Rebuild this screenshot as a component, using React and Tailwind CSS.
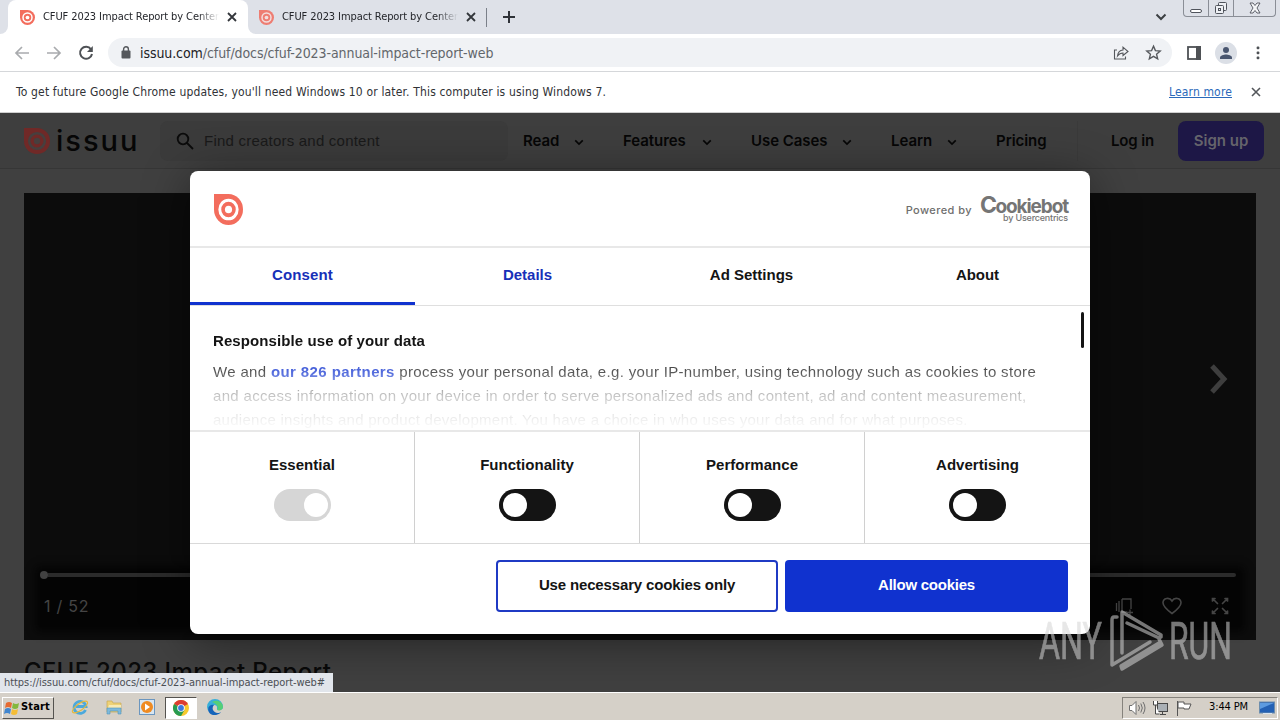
import React from 'react';

const TAHOMA = "font-['DejaVu_Sans_Condensed','DejaVu_Sans',sans-serif]";
const ARIAL = "font-['Liberation_Sans',Arial,sans-serif]";
const INTER = "font-['Inter',sans-serif]";

function IssuuMark({ className, ring = '#ffffff', fill = '#f36d5d' }) {
  return (
    <svg viewBox="0 0 30 30" className={className} preserveAspectRatio="none">
      <path d="M0 0H15A15 15 0 1 1 0 15Z" fill={fill} />
      <circle cx="15" cy="15" r="9" fill="none" stroke={ring} strokeWidth="3" />
      <circle cx="15" cy="15" r="3.7" fill={ring} />
    </svg>
  );
}

function Cross({ className, w = 1.8 }) {
  return (
    <svg viewBox="0 0 10 10" className={className} fill="none" stroke="currentColor" strokeWidth={w}>
      <path d="M1 1l8 8M9 1l-8 8" />
    </svg>
  );
}

function Chevron({ className }) {
  return (
    <svg viewBox="0 0 12 8" className={className} fill="none" stroke="currentColor" strokeWidth="2">
      <path d="M1.5 1.5L6 6l4.5-4.5" />
    </svg>
  );
}

function TabTitle() {
  return (
    <span className="ml-2 w-[178px] overflow-hidden whitespace-pre text-[11px] tracking-[-0.09px] text-[#24262b] [mask-image:linear-gradient(to_right,black_155px,transparent_176px)]">
      CFUF 2023 Impact Report by Center
    </span>
  );
}

function TabStrip() {
  return (
    <div className="flex h-[34px] shrink-0 items-start bg-[#dee1e8]">
      <div className="flex h-[34px] w-2 items-end bg-white"><div className="h-[34px] w-2 rounded-br-lg bg-[#dee1e8]" /></div>
      <div className="flex h-[34px] w-[240px] items-center rounded-t-lg bg-white pl-[12px]">
        <IssuuMark className="h-[15px] w-[15px]" />
        <TabTitle />
        <Cross className="ml-[6px] h-[10px] w-[10px] text-[#33363b]" />
      </div>
      <div className="h-[34px] w-2 bg-white"><div className="h-[34px] w-2 rounded-bl-lg bg-[#dee1e8]" /></div>
      <div className="flex h-[34px] w-[230px] items-center pl-[3px]">
        <IssuuMark className="h-[15px] w-[15px]" ring="#f3dede" fill="#ee7d72" />
        <TabTitle />
        <Cross className="ml-[6px] h-[10px] w-[10px] text-[#33363b]" />
      </div>
      <div className="mt-2 h-[19px] w-px bg-[#7b8089]" />
      <svg viewBox="0 0 12 12" className="mt-[11px] ml-4 h-3 w-3" stroke="#2f3238" strokeWidth="2"><path d="M6 0v12M0 6h12" /></svg>
      <div className="flex-1" />
      <Chevron className="mt-[13px] mr-[16px] h-[8px] w-[12px] text-[#3c4043]" />
      <div className="flex h-[17px] w-[93px] rounded-b border border-t-0 border-[#8a8e96]">
        <div className="flex w-[25px] items-end justify-center border-r border-[#8a8e96] pb-[3px]"><div className="h-[4px] w-3 rounded-sm border border-[#50545c] bg-white" /></div>
        <div className="flex w-[25px] justify-center border-r border-[#8a8e96] pt-[1px]">
          <svg viewBox="0 0 14 14" className="h-[14px] w-[14px]" fill="#eef0f4" stroke="#50545c"><rect x="4.500" y="1.500" width="8" height="8" rx="1" /><rect x="1.500" y="4.500" width="8" height="8" rx="1" /><rect x="4.500" y="7.500" width="2" height="2" /></svg>
        </div>
        <div className="flex flex-1 justify-center pt-[2px]">
          <svg viewBox="0 0 12 12" className="h-[12px] w-[12px]"><path d="M1 1h3l2 2.500L8 1h3L8 6l3 5H8L6 8.500 4 11H1l3-5z" fill="#f4f5f7" stroke="#50545c" strokeWidth="0.900" /></svg>
        </div>
      </div>
      <div className="w-[4px]" />
    </div>
  );
}

function Toolbar() {
  return (
    <div className="flex h-[38px] shrink-0 items-center border-b border-[#d5d7da] bg-white">
      <svg viewBox="0 0 16 16" className="ml-[14px] h-4 w-4" fill="none" stroke="#a9abae" strokeWidth="1.700"><path d="M15 8H2M8 2L2 8l6 6" /></svg>
      <svg viewBox="0 0 16 16" className="ml-4 h-4 w-4" fill="none" stroke="#a9abae" strokeWidth="1.700"><path d="M1 8h13M8 2l6 6-6 6" /></svg>
      <svg viewBox="0 0 16 16" className="ml-4 h-4 w-4" fill="none" stroke="#4e5155" strokeWidth="2"><path d="M13 4.300A6 6 0 1 0 14 9" /><path d="M14.800 1v6H9z" fill="#4e5155" stroke="none" /></svg>
      <div className="ml-[14px] flex h-[29px] w-[1064px] items-center rounded-full bg-[#f0f2f5] pl-[13px] pr-[10px]">
        <svg viewBox="0 0 10 13" className="h-[13px] w-[10px]"><rect x="0.500" y="4.500" width="9" height="8" rx="1" fill="#55585c" /><path d="M2.600 5V3.200a2.400 2.400 0 0 1 4.800 0V5" fill="none" stroke="#55585c" strokeWidth="1.400" /></svg>
        <span className="ml-[9px] text-[14px] leading-none tracking-[-0.08px] text-[#62666b]"><span className="text-[#202124]">issuu.com</span>/cfuf/docs/cfuf-2023-annual-impact-report-web</span>
        <div className="flex-1" />
        <svg viewBox="0 0 16 16" className="h-4 w-4" fill="none" stroke="#55585c" strokeWidth="1.100"><path d="M4 5H1.500v9h11v-2.500" /><path d="M4.500 11C5 7 7 5.200 10 5V2.200L15 6.500 10 10.500V8C7.500 8 6 9 4.500 11z" /></svg>
        <svg viewBox="0 0 24 24" className="ml-4 h-[17px] w-[17px]" fill="none" stroke="#55585c" strokeWidth="1.900"><path d="M12 3l2.700 6.300 6.800.6-5.200 4.500 1.600 6.700L12 17.500l-5.900 3.600 1.600-6.700L2.500 9.900l6.800-.6z" /></svg>
      </div>
      <svg viewBox="0 0 14 14" className="ml-[15px] h-[14px] w-[14px]"><rect x="1" y="1" width="12" height="12" fill="none" stroke="#4e5155" strokeWidth="1.800" /><rect x="9" y="0" width="5" height="14" fill="#4e5155" /></svg>
      <svg viewBox="0 0 22 22" className="ml-[14px] h-[22px] w-[22px]"><circle cx="11" cy="11" r="11" fill="#dbdfe6" /><circle cx="11" cy="8" r="3" fill="#49566f" /><path d="M5 17v-1.500c0-2 4-3 6-3s6 1 6 3V17z" fill="#49566f" /></svg>
      <svg viewBox="0 0 4 14" className="ml-[19px] h-[14px] w-[4px]" fill="#4e5155"><rect x=".6" y="0.500" width="2.800" height="2.800" rx="1" /><rect x=".6" y="5.500" width="2.800" height="2.800" rx="1" /><rect x=".6" y="10.500" width="2.800" height="2.800" rx="1" /></svg>
    </div>
  );
}

function NavItem({ label, className, chevron = true }) {
  return (
    <div className={`flex items-center ${className}`}>
      <span className="flex-1">{label}</span>
      {chevron && <Chevron className="mt-[2px] h-[7px] w-[10px]" />}
    </div>
  );
}

function SiteHeader() {
  return (
    <div className={`flex h-[56px] shrink-0 items-center border-b border-[#363636] bg-[#3e3e3e] text-[15px] font-semibold text-[#060606] ${INTER}`}>
      <IssuuMark className="ml-6 h-[26px] w-[26px]" fill="#702927" ring="#473f3e" />
      <span className="ml-[6px] w-[84px] text-[29px] leading-none font-medium tracking-[2px]">issuu</span>
      <div className="ml-[20px] flex h-10 w-[348px] shrink-0 items-center rounded-lg bg-[#3b3b3b] pl-4">
        <svg viewBox="0 0 18 18" className="h-[18px] w-[18px]" fill="none" stroke="#0b0b0b" strokeWidth="1.800"><circle cx="7" cy="7" r="5.300" /><path d="M11 11l6 6" /></svg>
        <span className={`mt-[2px] ml-[10px] text-[15px] font-normal tracking-[0.22px] text-[#191919] ${ARIAL}`}>Find creators and content</span>
      </div>
      <div className="flex pt-[2px] text-[15px] tracking-[-0.05px]">
        <NavItem label="Read" className="ml-[15px] w-[61px]" />
        <NavItem label="Features" className="ml-[39px] w-[89px]" />
        <NavItem label="Use Cases" className="ml-[39px] w-[101px]" />
        <NavItem label="Learn" className="ml-[39px] w-[66px]" />
        <NavItem label="Pricing" className="ml-[39px] w-[51px]" chevron={false} />
      </div>
      <div className="ml-[30px] h-10 w-px bg-[#3a3a3a]" />
      <span className="ml-[33px] w-[43px] pt-[2px] tracking-[-0.15px] whitespace-nowrap">Log in</span>
      <div className="ml-[24px] flex h-10 w-[86px] items-center justify-center rounded-lg bg-[#1d1746] pt-px text-[#65646b]">Sign up</div>
    </div>
  );
}

function Reader() {
  return (
    <div className="mx-6 mt-6 flex h-[447px] shrink-0 flex-col justify-between bg-[#0c0c0c]">
      <svg viewBox="0 0 22 34" className="mt-[169px] mr-[26px] h-[34px] w-[22px] self-end" fill="none" stroke="#3e3e3e" strokeWidth="5"><path d="M4 4l12 13L4 30" /></svg>
      <div className="mx-4 mb-[13px] bg-[#040404] pb-[10px] shadow-[0_0_8px_4px_#040404]">
        <div className="flex items-center">
          <div className="h-2 w-2 rounded-full bg-[#414141]" />
          <div className="mr-1 h-1 flex-1 rounded-r bg-[#2b2b2b]" />
        </div>
        <div className="mt-[16px] flex h-[22px] items-center px-1 text-[#454545]">
          <span className={`flex-1 text-[16px] tracking-[0.75px] ${INTER}`}>1 / 52</span>
          <svg viewBox="0 0 18 18" className="mr-[29px] h-[18px] w-[18px]" fill="none" stroke="currentColor" strokeWidth="1.300"><path d="M7 2h9v10M7 2v13h5M4 4v11M1.500 6v8M12 15.500h6M15 12.500v6" /></svg>
          <svg viewBox="0 0 20 18" className="mr-[29px] h-[18px] w-[20px]" fill="none" stroke="currentColor" strokeWidth="1.600"><path d="M10 16.500C4 12 1 9 1 5.700 1 1 7.500-.3 10 4c2.500-4.300 9-3 9 1.700 0 3.300-3 6.300-9 10.800z" /></svg>
          <svg viewBox="0 0 18 18" className="mr-[7px] h-[18px] w-[18px]" fill="none" stroke="currentColor" strokeWidth="1.700" strokeLinecap="round"><path d="M1.500 4V1.500H4M2 2l4.500 4.500M14 1.500h2.500V4M16 2l-4.500 4.500M1.500 14v2.500H4M2 16l4.500-4.500M16.500 14v2.500H14M16 16l-4.500-4.500" /></svg>
        </div>
      </div>
    </div>
  );
}

function Switch({ disabled }) {
  return disabled ? (
    <div className="flex h-8 w-[57px] items-center justify-end rounded-full bg-[#d6d6d6] pr-[3px]"><div className="h-6 w-6 rounded-full bg-white" /></div>
  ) : (
    <div className="flex h-8 w-[57px] items-center rounded-full bg-[#141414] pl-1"><div className="h-6 w-6 rounded-full bg-white" /></div>
  );
}

function ConsentDialog() {
  return (
    <div className={`absolute top-[171px] left-[190px] flex h-[463px] w-[900px] flex-col overflow-hidden rounded-lg bg-white text-[15px] text-[#141414] shadow-[0_8px_48px_rgba(0,0,0,0.45)] ${ARIAL}`}>
      <div className="flex h-[77px] shrink-0 items-center border-b-2 border-[#e8e8e8] pt-px pr-[22px] pl-[24px]">
        <IssuuMark className="h-[31px] w-[29px]" />
        <div className="flex-1" />
        <span className={`pt-[2px] text-[11px] font-medium tracking-[0.43px] text-[#6e6e6e] ${INTER}`}>Powered by</span>
        <div className={`ml-2 flex w-[88px] flex-col items-end whitespace-nowrap text-[#757575] ${INTER}`}>
          <span className="flex h-[17px] w-[88px] items-baseline text-[19px] leading-[18px] font-bold tracking-[-1.1px]"><span className="text-[23px] tracking-[-1.5px]">C</span>ookiebot</span>
          <span className="text-[9px] leading-[10px] font-medium tracking-[-0.2px]">by Usercentrics</span>
        </div>
      </div>
      <div className="grid h-[58px] shrink-0 grid-cols-4 border-b border-[#dfdfdf] text-center leading-[54px] font-bold">
        <div className="h-[57px] border-b-[3px] border-[#1032cf] tracking-[0.15px] text-[#1730b8]">Consent</div>
        <div className="text-[#1730b8]">Details</div>
        <div className="pr-[2px]">Ad Settings</div>
        <div className="tracking-[-0.1px]">About</div>
      </div>
      <div className="flex h-[126px] shrink-0 border-b-2 border-[#e8e8e8] pl-[23px]">
        <div className="h-[124px] flex-1 overflow-hidden whitespace-nowrap [mask-image:linear-gradient(to_bottom,black_40px,rgba(0,0,0,0.72)_66px,rgba(0,0,0,0.24)_90px,rgba(0,0,0,0.04)_118px)]">
          <div className="pt-[25px] leading-[20px] font-bold tracking-[0.1px]">Responsible use of your data</div>
          <div className="mt-[9px] leading-[24px] tracking-[0.33px]">
            <div>We and <b className="tracking-[0.4px] text-[#1032cf]">our 826 partners</b> process your personal data, e.g. your IP-number, using technology such as cookies to store</div>
            <div>and access information on your device in order to serve personalized ads and content, ad and content measurement,</div>
            <div className="tracking-[0.27px]">audience insights and product development. You have a choice in who uses your data and for what purposes.</div>
          </div>
        </div>
        <div className="mt-[6px] mr-[6px] h-[36px] w-[3px] rounded bg-[#141414]" />
      </div>
      <div className="grid h-[112px] shrink-0 grid-cols-4 divide-x divide-[#d0d0d0] border-b border-[#d9d9d9] text-center font-bold">
        {['Essential', 'Functionality', 'Performance', 'Advertising'].map((name, i) => (
          <div key={name} className="flex flex-col items-center pt-[22px] leading-[22px] tracking-[0.03px]">
            {name}
            <div className="mt-[13px]"><Switch disabled={i === 0} /></div>
          </div>
        ))}
      </div>
      <div className="flex flex-1 justify-end gap-[7px] pt-[16px] pr-[22px] font-bold">
        <div className="flex h-[52px] w-[282px] items-center justify-center rounded-[4px] border-2 border-[#1f3ac4] pb-[2px] tracking-[-0.15px]">Use necessary cookies only</div>
        <div className="flex h-[52px] w-[283px] items-center justify-center rounded-[4px] bg-[#1032cf] pb-[2px] tracking-[-0.25px] text-white">Allow cookies</div>
      </div>
    </div>
  );
}

function Watermark() {
  return (
    <svg viewBox="0 0 198 64" className="absolute top-[609px] left-[1038px] h-[64px] w-[198px] opacity-55">
      <g fill="#d4d4d4" stroke="#d4d4d4" strokeWidth="0.700" fontFamily="Roboto, sans-serif" fontSize="51" fontWeight="400">
        <text x="1" y="50" textLength="63" lengthAdjust="spacingAndGlyphs">ANY</text>
        <text x="131" y="50" textLength="63" lengthAdjust="spacingAndGlyphs">RUN</text>
      </g>
      <g fill="none" stroke="#d4d4d4" strokeWidth="3.500" strokeLinecap="round" strokeLinejoin="round">
        <path d="M84 44V3l39 23M123 26v2l-2 1L89 14" />
        <path d="M79 8h-3q-2 0-2 3v45l38-23" />
        <path d="M121 30l3 6-40 24-1-3 38-23" />
      </g>
    </svg>
  );
}

function Taskbar() {
  return (
    <div className="flex h-[28px] shrink-0 items-center border-t border-white bg-[#d5d0c8]">
      <div className="ml-[2px] mt-[2px] flex h-[22px] w-[52px] items-center border border-t-white border-r-[#55534f] border-b-[#55534f] border-l-white pl-[1px] text-[11px] font-bold tracking-[0.15px] text-black">
        <svg viewBox="0 0 16 16" className="mr-[1px] h-4 w-4"><path d="M2 3q3-2 6 0L7 8Q4 6 1 8z" fill="#e66b32" /><path d="M9 3q3 2 6 0l-1 5q-3 2-6 0z" fill="#83b83c" /><path d="M1 9q3-2 6 0l-1 5Q3 12 0 14z" fill="#4186cf" /><path d="M8 9q3 2 6 0l-1 5q-3 2-6 0z" fill="#f4bd35" /></svg>
        Start
      </div>
      <svg viewBox="0 0 18 18" className="ml-[17px] h-[18px] w-[18px]"><path d="M14.500 12A6 6 0 1 1 15 8.500H5" fill="none" stroke="#4ba9dc" strokeWidth="2.800" /><ellipse cx="9" cy="9" rx="9" ry="3.300" transform="rotate(-35 9 9)" fill="none" stroke="#e5b83c" strokeWidth="1.200" /></svg>
      <svg viewBox="0 0 18 18" className="ml-[16px] h-[18px] w-[18px]"><path d="M2 3h5l1 2h8v9H2z" fill="#eed277" stroke="#c9a953" strokeWidth=".7" /><path d="M4 7h12v3H3z" fill="#f8eab4" /><path d="M2 16v-6h14v6h-3v-3H5v3z" fill="#7eb9db" stroke="#5096bd" strokeWidth=".6" /></svg>
      <svg viewBox="0 0 18 18" className="ml-[15px] h-[18px] w-[18px]"><rect x="1.500" y="1.500" width="15" height="15" fill="#d8e6f1" stroke="#6b96bf" /><circle cx="9" cy="9" r="6" fill="#ef8b22" /><path d="M7 5.500l5 3.500-5 3.500z" fill="#fff" /></svg>
      <div className="ml-[9px] mt-[2px] flex h-[22px] w-[32px] items-center justify-center border border-t-[#55534f] border-r-white border-b-white border-l-[#55534f] bg-white">
        <svg viewBox="0 0 16 16" className="h-4 w-4"><circle cx="8" cy="8" r="8" fill="#f7c92d" /><path d="M8 8L1.070 4A8 8 0 0 1 14.930 4z" fill="#dc3d32" /><path d="M8 8L1.070 4A8 8 0 0 0 8 16l3.500-6z" fill="#279b51" /><circle cx="8" cy="8" r="3.800" fill="#fff" /><circle cx="8" cy="8" r="2.900" fill="#3c79dd" /></svg>
      </div>
      <svg viewBox="0 0 16 16" className="ml-[10px] h-4 w-4"><path d="M0 8a8 8 0 0 1 16 0c0 4-7 4-6 1 .4-2-1-3-3-3-4 0-7 4-4 8A8 8 0 0 1 0 8z" fill="#38afd9" /><path d="M5 3c5-3 11 0 11 5 0 3-4 4-6 3 2-3 0-6-5-8z" fill="#55cf76" /><path d="M2.500 14C-1 9 3 5 7 6c-3 3-1 8 5 8l2-1c-3 4-9 4-11.500 1z" fill="#1464ba" /></svg>
      <div className="flex-1" />
      <div className="mr-[2px] mt-[2px] flex h-[22px] w-[156px] items-center border border-t-[#85827c] border-r-white border-b-white border-l-[#85827c]">
        <svg viewBox="0 0 18 16" className="ml-[5px] h-[16px] w-[18px]" fill="none" stroke="#6f6f6f"><path d="M1.500 5.500H4l4-4v13l-4-4H1.500z" fill="#fff" /><path d="M10.500 5q2 3 0 6M12.800 3.500q3 4.500 0 9M15 2q4 6 0 12" /></svg>
        <svg viewBox="0 0 16 16" className="ml-[6px] h-[16px] w-[16px]" fill="none" stroke="#484848"><rect x="5.500" y="3.500" width="10" height="8" fill="#aab0b5" /><path d="M8 14.500h6M10.500 12v2" /><path d="M1.500 1v4h4V1M3.500 5v9h4" fill="#fff" /></svg>
        <svg viewBox="0 0 16 16" className="ml-[8px] h-[16px] w-[16px]" fill="#fff" stroke="#555"><path d="M1.500 1v15" /><path d="M2 2h6v2h7l-2 5H8V8H2z" /></svg>
        <span className="ml-[17px] text-[11px] tracking-[-0.12px] whitespace-nowrap text-black">3:44 PM</span>
        <svg viewBox="0 0 16 14" className="ml-[11px] h-[14px] w-[16px]"><rect x=".5" y="1" width="15" height="11" fill="#2461b4" stroke="#6d8eae" /><path d="M1 2h14L1 8z" fill="#5d9be0" /><path d="M4 12.500h9" stroke="#d9e4ef" /></svg>
      </div>
    </div>
  );
}

export default function App() {
  return (
    <div className={`relative flex h-[720px] w-[1280px] flex-col overflow-hidden bg-white ${TAHOMA}`}>
      <TabStrip />
      <Toolbar />
      <div className="flex h-[41px] shrink-0 items-center border-b border-[#cfcfcf] px-4 text-[12px] text-[#303236]">
        <span className="flex-1 tracking-[0.16px]">To get future Google Chrome updates, you'll need Windows 10 or later. This computer is using Windows 7.</span>
        <span className="tracking-[0.15px] text-[#2a69ba] underline underline-offset-1">Learn more</span>
        <Cross className="mr-[3px] ml-[19px] h-[10px] w-[10px] text-[#54575b]" w={1.6} />
      </div>
      <div className="flex h-[579px] shrink-0 flex-col overflow-hidden bg-[#404040]">
        <SiteHeader />
        <Reader />
        <h1 className={`mt-[16px] ml-6 text-[24px] leading-[32px] font-medium tracking-[0.4px] text-[#090909] ${INTER}`}>CFUF 2023 Impact Report</h1>
      </div>
      <Taskbar />
      <ConsentDialog />
      <div className="absolute top-[673px] left-0 flex h-[19px] w-[333px] items-center bg-[#e1e5eb] pl-1 pt-px text-[11px] tracking-[-0.06px] whitespace-nowrap text-[#4b4f55]">https://issuu.com/cfuf/docs/cfuf-2023-annual-impact-report-web#</div>
      <Watermark />
    </div>
  );
}
